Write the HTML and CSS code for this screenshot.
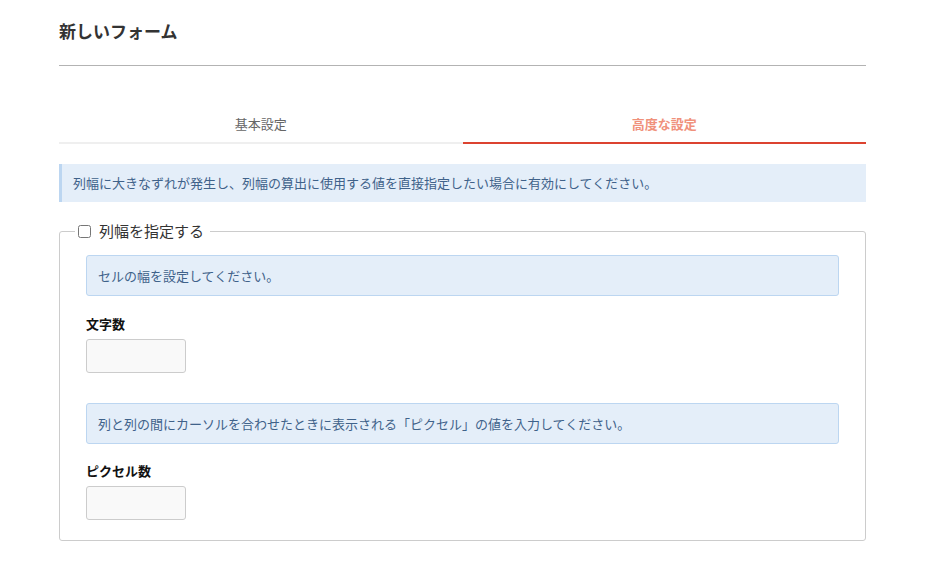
FILE: index.html
```html
<!DOCTYPE html>
<html lang="ja">
<head>
<meta charset="utf-8">
<title>新しいフォーム</title>
<link rel="stylesheet" href="styles.css">
</head>
<body>
<div class="page">
  <h1 class="title">新しいフォーム</h1>
  <hr class="rule">
  <div class="tabs">
    <div class="tab">基本設定</div>
    <div class="tab active">高度な設定</div>
  </div>
  <div class="notice">列幅に大きなずれが発生し、列幅の算出に使用する値を直接指定したい場合に有効にしてください。</div>
  <fieldset class="group">
    <legend class="legend"><input type="checkbox" class="check"><span>列幅を指定する</span></legend>
    <div class="hint">セルの幅を設定してください。</div>
    <div class="field">
      <label class="label">文字数</label>
      <input type="text" class="input">
    </div>
    <div class="hint hint-gap">列と列の間にカーソルを合わせたときに表示される「ピクセル」の値を入力してください。</div>
    <div class="field field-tight">
      <label class="label">ピクセル数</label>
      <input type="text" class="input">
    </div>
  </fieldset>
</div>
</body>
</html>
```
FILE: styles.css
```css
* { box-sizing: border-box; }
html, body { margin: 0; padding: 0; background: #fff; }
body {
  font-family: "Noto Sans CJK JP", "Noto Sans", sans-serif;
  color: #333;
}
.page {
  width: 807px;
  margin-left: 59px;
  padding-top: 19px;
}
.title {
  margin: 0;
  font-size: 17px;
  line-height: 24px;
  font-weight: bold;
  color: #333;
}
.rule {
  margin: 22px 0 0;
  border: 0;
  border-top: 1px solid #b3b3b3;
  height: 0;
}
.tabs {
  display: flex;
  margin-top: 48px;
}
.tab {
  flex: 1;
  text-align: center;
  font-size: 13px;
  line-height: 20px;
  padding-bottom: 8px;
  color: #666;
  border-bottom: 2px solid #efefef;
}
.tab.active {
  color: #f0917b;
  font-weight: bold;
  border-bottom-color: #dc4330;
}
.notice {
  margin-top: 20px;
  background: #e4eef9;
  border-left: 3px solid #bcd6f1;
  padding: 9px 11px;
  font-size: 13px;
  line-height: 20px;
  color: #3f628a;
}
.group {
  margin: 18px 0 0;
  border: 1px solid #cccccc;
  border-radius: 3px;
  padding: 13px 26px 20px;
  min-width: 0;
}
.legend {
  margin-left: -11px;
  padding: 0 6px 0 3px;
  display: flex;
  align-items: center;
  gap: 8px;
  font-size: 15px;
  line-height: 22px;
  color: #333;
}
.check {
  margin: 0;
  width: 13px;
  height: 13px;
}
.hint {
  background: #e4eef9;
  border: 1px solid #bcd6f1;
  border-radius: 3px;
  padding: 9px 11px;
  font-size: 13px;
  line-height: 21px;
  color: #3f628a;
}
.hint-gap { margin-top: 30px; }
.field {
  margin-top: 18px;
  display: flex;
  flex-direction: column;
  align-items: flex-start;
  gap: 5px;
}
.field-tight { margin-top: 17px; }
.label {
  font-size: 13px;
  line-height: 20px;
  font-weight: bold;
  color: #111;
}
.input {
  width: 100px;
  height: 34px;
  margin: 0;
  background: #f9f9f9;
  border: 1px solid #cccccc;
  border-radius: 3px;
  font-size: 13px;
}
```
